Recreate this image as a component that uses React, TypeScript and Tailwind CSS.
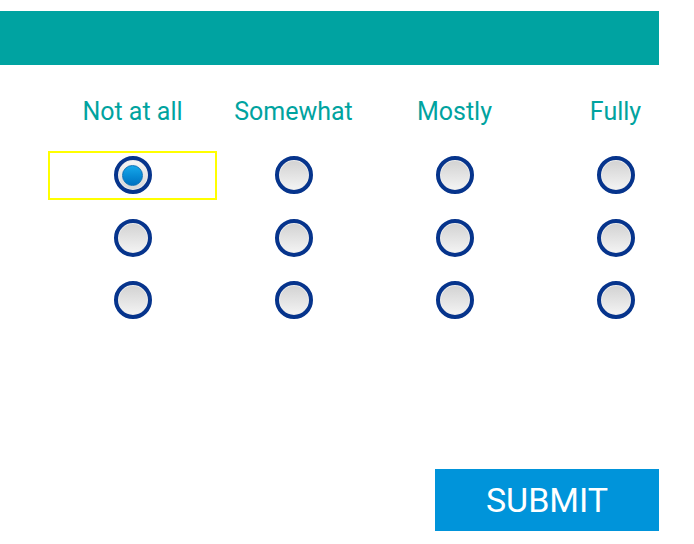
import React, { useState } from 'react';

const labels = ['Not at all', 'Somewhat', 'Mostly', 'Fully'];
const rows = [0, 1, 2];

const Radio = ({ checked }: { checked: boolean }) => (
  <div className="w-[38px] h-[38px] rounded-full border-[4px] border-[#06348c] bg-[#ececec] p-[1px]">
    {checked ? (
      <div className="w-full h-full rounded-full bg-gradient-to-b from-[#f5f5f5] to-[#d8d8d8] flex items-center justify-center">
        <div className="w-[21px] h-[21px] rounded-full border border-[#0a72b8] bg-gradient-to-b from-[#16a8ea] to-[#0072c2]" />
      </div>
    ) : (
      <div className="w-full h-full rounded-full bg-gradient-to-b from-[#d3d3d3] to-[#f3f3f3]" />
    )}
  </div>
);

export default function App() {
  const [answers, setAnswers] = useState<number[]>([0, -1, -1]);

  const pick = (row: number, col: number) => {
    setAnswers((prev) => prev.map((v, i) => (i === row ? col : v)));
  };

  return (
    <div className="min-h-screen bg-white font-['Roboto',sans-serif] pt-[11px]">
      <div className="w-[659px]">
        {/* Header bar */}
        <div className="h-[54px] bg-[#00a3a1]" />

        {/* Scale labels */}
        <div className="ml-[52px] mt-[33px] grid grid-cols-[repeat(4,161px)]">
          {labels.map((l) => (
            <div key={l} className="text-center text-[25px] leading-[28px] text-[#00a39f]">
              {l}
            </div>
          ))}
        </div>

        {/* Radio grid */}
        <div className="ml-[52px] mt-[18px] grid grid-cols-[repeat(4,161px)]">
          {rows.map((r) =>
            labels.map((_, c) => (
              <div key={`${r}-${c}`} className="h-[62.5px] flex items-center justify-center">
                {r === 0 && c === 0 ? (
                  <div className="w-[169px] h-[49px] shrink-0 border-2 border-[#ffff00] flex items-center justify-center">
                    <button onClick={() => pick(r, c)}>
                      <Radio checked={answers[r] === c} />
                    </button>
                  </div>
                ) : (
                  <button onClick={() => pick(r, c)}>
                    <Radio checked={answers[r] === c} />
                  </button>
                )}
              </div>
            ))
          )}
        </div>

        {/* Submit */}
        <div className="mt-[137.5px] flex justify-end">
          <button className="w-[224px] h-[62px] bg-[#0094da] text-white text-[34px] leading-none">
            SUBMIT
          </button>
        </div>
      </div>
    </div>
  );
}
